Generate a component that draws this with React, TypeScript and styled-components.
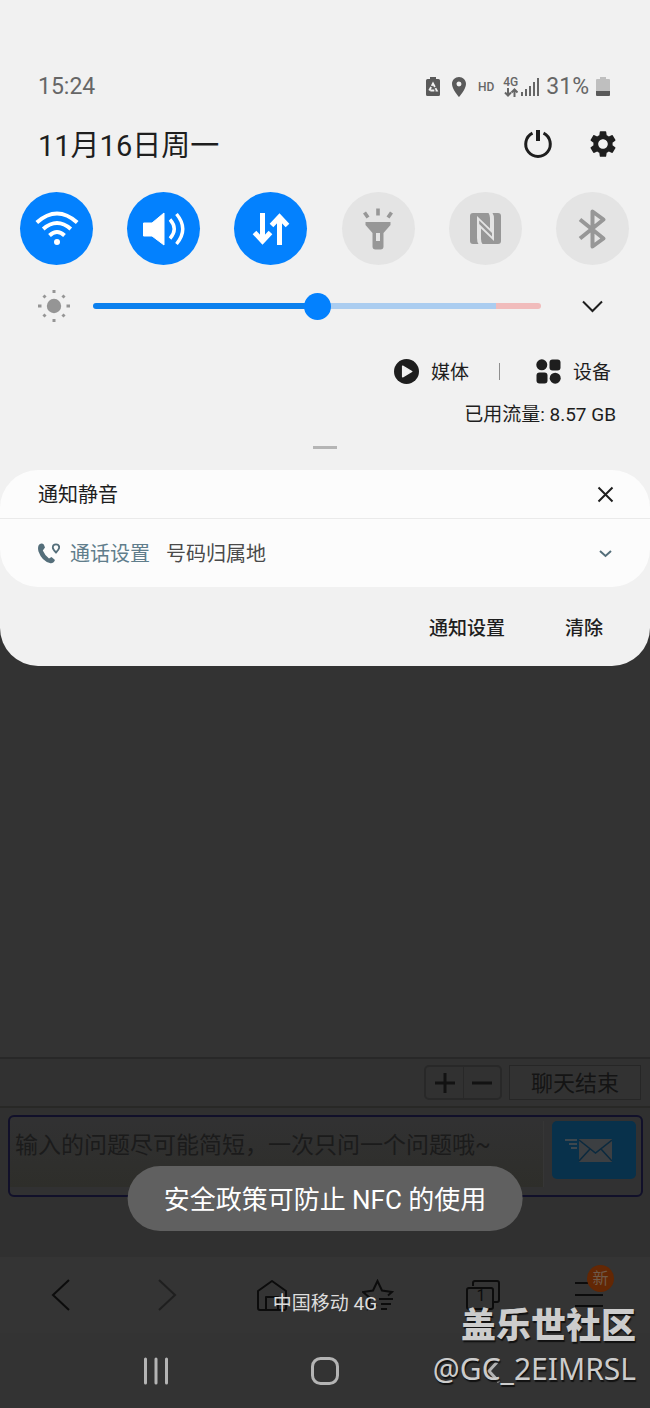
import React from "react";
import styled, { createGlobalStyle, css } from "styled-components";
import { MdLocationOn, MdSettings } from "react-icons/md";

const GlobalStyle = createGlobalStyle`
  *, *::before, *::after { box-sizing: border-box; }
  body {
    margin: 0;
    background: #333333;
    font-family: Roboto, "Noto Sans CJK SC", sans-serif;
    color: #1e1e1e;
  }
  button, input, textarea { font: inherit; color: inherit; }
  button { border: 0; padding: 0; background: none; cursor: pointer; }
  svg { display: block; flex: none; }
`;

const Screen = styled.div`
  position: relative;
  min-height: 100vh;
  display: flex;
  flex-direction: column;
`;

const Shade = styled.section`
  background: #f1f1f1;
  border-radius: 0 0 38px 38px;
  padding-top: 72px;
`;

const StatusBar = styled.div`
  display: flex;
  align-items: center;
  justify-content: space-between;
  height: 30px;
  padding: 0 40px 0 38px;
  font-size: 23px;
  line-height: 30px;
  color: #666666;
`;

const StatusIcons = styled.div`
  display: flex;
  align-items: center;
  gap: 7px;
`;

const HdMark = styled.span`
  font-size: 12px;
  font-weight: 500;
  margin: 0 2px 0 0;
`;

const Network = styled.span`
  display: flex;
  align-items: center;
  gap: 3px;
`;

const NetworkType = styled.span`
  display: flex;
  flex-direction: column;
  align-items: center;
  font-size: 12px;
  line-height: 11px;
  font-weight: 500;
`;

const BatteryLevel = styled.span`
  display: flex;
  align-items: center;
  gap: 7px;
`;

const DateRow = styled.header`
  display: flex;
  align-items: center;
  justify-content: space-between;
  height: 44px;
  margin-top: 20px;
  padding: 0 31px 0 38px;
`;

const DateText = styled.h1`
  margin: 0;
  padding-top: 4px;
  font-size: 29px;
  line-height: 40px;
  font-weight: 400;
`;

const HeaderActions = styled.div`
  display: flex;
  align-items: center;
  gap: 34px;
`;

const IconButton = styled.button`
  display: flex;
  align-items: center;
  justify-content: center;
`;

const Toggles = styled.div`
  display: flex;
  justify-content: space-between;
  margin-top: 26px;
  padding: 0 21px 0 20px;
`;

const Toggle = styled.button<{ $on?: boolean }>`
  width: 73px;
  height: 73px;
  border-radius: 50%;
  display: flex;
  align-items: center;
  justify-content: center;
  background: ${(p) => (p.$on ? "#0381fe" : "#e4e4e4")};
  color: ${(p) => (p.$on ? "#ffffff" : "#979797")};
`;

const BrightnessRow = styled.div`
  display: flex;
  align-items: center;
  height: 30px;
  margin-top: 26px;
  padding: 0 47px 0 38px;
`;

const thumb = css`
  width: 27px;
  height: 27px;
  border: 0;
  border-radius: 50%;
  background: #0381fe;
`;

const Brightness = styled.input`
  appearance: none;
  flex: 1;
  min-width: 0;
  height: 6px;
  margin: 0 41px 0 23px;
  border-radius: 3px;
  background: linear-gradient(90deg, #0b80ee 50%, #abcdf0 50%, #abcdf0 90%, #f1bcbc 90%);
  &::-webkit-slider-thumb { appearance: none; ${thumb} }
  &::-moz-range-thumb { ${thumb} }
`;

const Shortcuts = styled.div`
  display: flex;
  justify-content: flex-end;
  align-items: center;
  height: 30px;
  margin-top: 35px;
  padding-right: 39px;
`;

const Shortcut = styled.button`
  display: flex;
  align-items: center;
  gap: 12px;
  font-size: 19px;
  line-height: 28px;
`;

const ShortcutLabel = styled.span`
  padding-top: 3px;
`;

const Divider = styled.span`
  width: 1px;
  height: 17px;
  margin: 0 36px 0 30px;
  background: #8f8f8f;
`;

const DataUsage = styled.p`
  margin: 17px 34px 0;
  text-align: right;
  font-size: 19px;
  line-height: 24px;
`;

const Handle = styled.div`
  width: 24px;
  height: 3px;
  margin: 19px auto 0;
  background: #b5b5b5;
`;

const Card = styled.div`
  margin-top: 21px;
  border-radius: 38px;
  background: #fcfcfc;
`;

const CardRow = styled.div<{ $tall?: boolean }>`
  display: flex;
  align-items: center;
  height: ${(p) => (p.$tall ? "68px" : "49px")};
  padding: 0 36px 0 38px;
  border-bottom: ${(p) => (p.$tall ? "0" : "1px solid #eaeaea")};
  font-size: 20px;
  line-height: 30px;
  & > span { padding-top: 2px; }
  & > button { margin-left: auto; }
`;

const AppName = styled.span`
  margin: 0 16px 0 10px;
  color: #607d8b;
`;

const NoticeText = styled.span`
  color: #4a4a4a;
`;

const ShadeFooter = styled.footer`
  display: flex;
  justify-content: flex-end;
  gap: 60px;
  height: 79px;
  padding: 0 47px 0 0;
`;

const FooterButton = styled.button`
  font-size: 19px;
  font-weight: 500;
`;

const Backdrop = styled.div`
  flex: 1;
  min-height: 120px;
`;

const Chat = styled.section`
  height: 200px;
  background: #303030;
`;

const ChatTools = styled.div`
  display: flex;
  align-items: center;
  justify-content: flex-end;
  gap: 7px;
  height: 51px;
  padding: 0 9px;
  border-top: 2px solid #282828;
  border-bottom: 2px solid #282826;
  background: #313131;
`;

const ZoomGroup = styled.div`
  display: flex;
  border: 2px solid #282828;
  border-radius: 5px;
`;

const ZoomButton = styled.button`
  display: flex;
  align-items: center;
  justify-content: center;
  width: 37px;
  height: 31px;
  color: #121212;
  & + & { border-left: 1px solid #282828; }
`;

const EndChat = styled.button`
  width: 132px;
  height: 35px;
  padding-top: 2px;
  border: 1px solid #262626;
  background: #323232;
  color: #141414;
  font-size: 22px;
  line-height: 30px;
`;

const Composer = styled.form`
  display: flex;
  align-items: flex-start;
  gap: 8px;
  height: 82px;
  margin: 7px 7px 0 8px;
  padding: 4px 5px 0 0;
  border: 2px solid #11102a;
  border-radius: 6px;
  background: #313132;
`;

const Message = styled.textarea`
  flex: 1;
  min-width: 0;
  height: 66px;
  padding: 9px 5px;
  border: 0;
  border-right: 1px solid #363636;
  resize: none;
  background: linear-gradient(#313132, #2e2e2a);
  font-size: 23px;
  line-height: 32px;
  &::placeholder { color: #1b1b1b; opacity: 1; }
`;

const Send = styled.button`
  display: flex;
  align-items: center;
  justify-content: center;
  width: 84px;
  height: 58px;
  padding-right: 13px;
  border-radius: 5px;
  background: #08314b;
`;

const BrowserBar = styled.nav`
  display: flex;
  justify-content: space-between;
  height: 76px;
  padding: 16px 43px 0;
  background: #343434;
  color: #0c0c0c;
`;

const BrowserButton = styled.button<{ $faded?: boolean }>`
  position: relative;
  display: flex;
  align-items: center;
  justify-content: center;
  width: 36px;
  height: 44px;
  opacity: ${(p) => (p.$faded ? 0.5 : 1)};
`;

const TabCount = styled.span`
  position: absolute;
  left: 11px;
  top: 13px;
  font-size: 16px;
  line-height: 20px;
`;

const NewBadge = styled.span`
  position: absolute;
  left: 16px;
  top: -8px;
  width: 27px;
  height: 27px;
  border-radius: 50%;
  background: #632704;
  color: #6f5a4a;
  font-size: 16px;
  line-height: 27px;
  text-align: center;
`;

const SystemNav = styled.nav`
  display: flex;
  align-items: center;
  justify-content: space-between;
  width: 100%;
  height: 75px;
  padding: 0 142px;
  color: #b4b4b4;
`;

const SystemButton = styled(IconButton)`
  width: 28px;
  height: 44px;
`;

const Toast = styled.div`
  position: absolute;
  left: 50%;
  bottom: 177px;
  transform: translateX(-50%);
  padding: 4px 36px 0;
  border-radius: 33px;
  background: #606060;
  color: #ffffff;
  font-size: 26px;
  line-height: 61px;
  white-space: nowrap;
`;

const Carrier = styled.div`
  position: absolute;
  left: 0;
  right: 0;
  bottom: 90px;
  text-align: center;
  font-size: 19px;
  line-height: 28px;
  color: #dddddd;
`;

const Watermark = styled.div`
  position: absolute;
  right: 14px;
  bottom: 16px;
  text-align: right;
  color: #cccccc;
  text-shadow: 1px 2px 1px #111111;
`;

const Community = styled.div`
  font-family: "Noto Sans CJK SC", sans-serif;
  font-size: 35px;
  line-height: 46px;
  font-weight: 900;
`;

const Author = styled.div`
  font-family: "Noto Sans", sans-serif;
  font-size: 30px;
  line-height: 46px;
`;

const Stroke = ({ w, h, sw = 2, children }: { w: number; h: number; sw?: number; children: React.ReactNode }) => (
  <svg width={w} height={h} viewBox={`0 0 ${w} ${h}`} fill="none" stroke="currentColor" strokeWidth={sw} aria-hidden="true">
    {children}
  </svg>
);

const RecycleBattery = () => (
  <svg width="14" height="20" viewBox="0 0 14 20" aria-hidden="true">
    <path fill="#5a5a5a" d="M4 0h6v2h2.500q1.500 0 1.500 1.500v14q0 1.500-1.500 1.500h-11Q0 19 0 17.500v-14Q0 2 1.500 2H4z" />
    <path fill="none" stroke="#f1f1f1" strokeWidth="1.800" strokeDasharray="4 1.200" d="M7 6.500L10.800 13.500H3.200Z" />
  </svg>
);

const DataArrows = () => (
  <Stroke w={14} h={9} sw={2}>
    <path d="M4 0v7M1 4.500l3 3 3-3M10.500 9V2M7.500 4.500l3-3 3 3" />
  </Stroke>
);

const Signal = () => (
  <svg width="18" height="18" viewBox="0 0 18 18" fill="#666666" aria-hidden="true">
    <path d="M0 14h2v4H0zM4 11h2v7H4zM8 8h2v10H8zM12 4h2v14h-2zM16 0h2v18h-2z" />
  </svg>
);

const Battery = () => (
  <svg width="14" height="20" viewBox="0 0 14 20" aria-hidden="true">
    <path fill="#bfbfbf" d="M4 0h6v2h3q1 0 1 1v11H0V3q0-1 1-1h3z" />
    <path fill="#5a5a5a" d="M0 14h14v4q0 1-1 1H1q-1 0-1-1z" />
  </svg>
);

const Power = () => (
  <Stroke w={30} h={30} sw={3}>
    <path d="M9.500 4.200A12.300 12.300 0 1 0 20.500 4.200" />
    <path strokeWidth="4" d="M15 1v11" />
  </Stroke>
);

const Wifi = () => (
  <svg width="44" height="36" viewBox="0 0 44 36" fill="none" stroke="currentColor" strokeWidth="4" aria-hidden="true">
    <path d="M1.800 11.500Q22-6.500 42.200 11.500M8.200 18Q22 6 35.800 18M14.500 24.500Q22 17.500 29.500 24.500" />
    <circle cx="22" cy="31" r="3" fill="currentColor" stroke="none" />
  </svg>
);

const Sound = () => (
  <svg width="42" height="34" viewBox="0 0 42 34" aria-hidden="true">
    <path fill="currentColor" stroke="currentColor" strokeWidth="1" strokeLinejoin="round" d="M.5 11H9L21 1v32L9 24H.5z" />
    <path fill="none" stroke="currentColor" strokeWidth="3.400" d="M27 7.500q8.500 9.500 0 19M33.500 2q12.500 15 0 30" />
  </svg>
);

const MobileData = () => (
  <Stroke w={38} h={34} sw={5}>
    <path d="M10.500 1v27M2.500 20.500l8 8.500 8-8.500M27.500 33V6M19.500 13.500l8-8.500 8 8.500" />
  </Stroke>
);

const Torch = () => (
  <svg width="30" height="42" viewBox="0 0 30 42" aria-hidden="true">
    <path fill="currentColor" fillRule="evenodd" d="M2.500 14h25v3l-7 8v13.500q0 3-3 3h-5q-3 0-3-3V25l-7-8zM13 25v8h4v-8z" />
    <path fill="none" stroke="currentColor" strokeWidth="3.600" d="M15 .5v7M1.500 4.500l3.500 5M28.500 4.500l-3.500 5" />
  </svg>
);

const Nfc = () => (
  <svg width="31" height="31" viewBox="0 0 31 31" aria-hidden="true">
    <rect width="31" height="31" rx="3" fill="currentColor" />
    <path fill="#e4e4e4" d="M7 3L20 15.500V5Q20 2 18.500 0h4Q24 2 24 6V28L11 15.500V26q0 3 1.500 5h-4Q7 29 7 25z" />
    <path fill="currentColor" d="M9.200 7.500L22 20v3.500L9.200 11z" />
  </svg>
);

const Bluetooth = () => (
  <Stroke w={30} h={42} sw={4}>
    <path strokeLinejoin="round" d="M3 11.500L26.500 30.500 15.500 38.500V3.500L26.500 11.500 3 30.500" />
  </Stroke>
);

const Sun = () => (
  <svg width="32" height="32" viewBox="0 0 32 32" aria-hidden="true">
    <circle cx="16" cy="16" r="7.200" fill="#959595" />
    <path stroke="#959595" strokeWidth="3" d="M16 0v3M16 29v3M0 16h3.500M28.500 16H32M5.500 5.500l2 2M24.500 24.500l2 2M26.500 5.500l-2 2M7.500 24.500l-2 2" />
  </svg>
);

const Chevron = ({ w, h, sw, color = "currentColor" }: { w: number; h: number; sw: number; color?: string }) => (
  <Stroke w={w} h={h} sw={sw}>
    <path stroke={color} d={`M1 1.500L${w / 2} ${h - 2}L${w - 1} 1.500`} />
  </Stroke>
);

const PlayCircle = () => (
  <svg width="25" height="25" viewBox="0 0 26 26" aria-hidden="true">
    <circle cx="13" cy="13" r="13" fill="#1e1e1e" />
    <path d="M9 7.500v11l9.500-5.500z" fill="#f1f1f1" stroke="#f1f1f1" strokeWidth="1.500" strokeLinejoin="round" />
  </svg>
);

const Devices = () => (
  <svg width="25" height="25" viewBox="0 0 25 25" fill="#1e1e1e" aria-hidden="true">
    <circle cx="5.800" cy="5.800" r="5.500" />
    <rect x="13.500" y="0.500" width="11" height="11" rx="3" />
    <rect x="0.500" y="13.500" width="11" height="11" rx="3" />
    <circle cx="19.200" cy="19.200" r="5.500" />
  </svg>
);

const CallLocation = () => (
  <svg width="22" height="21" viewBox="0 0 22 21" aria-hidden="true">
    <path fill="#546e7a" d="M1.500 1.200Q4-.3 5.800 1.500L7 4.500 4.800 7.500Q7 12.500 11 15.500L13.500 14 17 17Q15.500 20.500 12.500 20.200 4 18.500.5 8.500-.8 3 1.500 1.200z" />
    <path fill="none" stroke="#546e7a" strokeWidth="1.800" d="M18 9.500q-3.200-3.200-3.200-5a3.200 3.200 0 0 1 6.400 0q0 1.800-3.200 5z" />
  </svg>
);

const Envelope = () => (
  <svg width="48" height="24" viewBox="0 0 48 24" aria-hidden="true">
    <path fill="none" stroke="#3d474e" strokeWidth="2" d="M1 2h12M5 6h8M7 10h6" />
    <rect x="15" y="1" width="33" height="23" fill="#3c3f42" />
    <path fill="none" stroke="#0b2a3f" strokeWidth="1.500" d="M15 2l16.500 13L48 2M15 23l11-12M48 23L37 11" />
  </svg>
);

const TOGGLES = [
  { label: "WLAN", on: true, Icon: Wifi },
  { label: "声音", on: true, Icon: Sound },
  { label: "移动数据", on: true, Icon: MobileData },
  { label: "手电筒", on: false, Icon: Torch },
  { label: "NFC", on: false, Icon: Nfc },
  { label: "蓝牙", on: false, Icon: Bluetooth },
];

export default function App() {
  return (
    <>
      <GlobalStyle />
      <Screen>
        <Shade>
          <StatusBar>
            <span>15:24</span>
            <StatusIcons>
              <RecycleBattery />
              <MdLocationOn size={24} color="#5a5a5a" />
              <HdMark>HD</HdMark>
              <Network>
                <NetworkType>
                  4G
                  <DataArrows />
                </NetworkType>
                <Signal />
              </Network>
              <BatteryLevel>
                31%
                <Battery />
              </BatteryLevel>
            </StatusIcons>
          </StatusBar>

          <DateRow>
            <DateText>11月16日周一</DateText>
            <HeaderActions>
              <IconButton aria-label="电源"><Power /></IconButton>
              <IconButton aria-label="设置"><MdSettings size={32} /></IconButton>
            </HeaderActions>
          </DateRow>

          <Toggles>
            {TOGGLES.map(({ label, on, Icon }) => (
              <Toggle key={label} $on={on} aria-label={label} aria-pressed={on}>
                <Icon />
              </Toggle>
            ))}
          </Toggles>

          <BrightnessRow>
            <Sun />
            <Brightness type="range" min={0} max={100} defaultValue={50} aria-label="亮度" />
            <IconButton aria-label="展开"><Chevron w={21} h={13} sw={2} /></IconButton>
          </BrightnessRow>

          <Shortcuts>
            <Shortcut><PlayCircle /><ShortcutLabel>媒体</ShortcutLabel></Shortcut>
            <Divider />
            <Shortcut><Devices /><ShortcutLabel>设备</ShortcutLabel></Shortcut>
          </Shortcuts>
          <DataUsage>已用流量: 8.57 GB</DataUsage>
          <Handle />

          <Card>
            <CardRow>
              <span>通知静音</span>
              <IconButton aria-label="关闭">
                <Stroke w={17} h={17} sw={2}><path d="M1.500 1.500l14 14M15.500 1.500l-14 14" /></Stroke>
              </IconButton>
            </CardRow>
            <CardRow $tall>
              <CallLocation />
              <AppName>通话设置</AppName>
              <NoticeText>号码归属地</NoticeText>
              <IconButton aria-label="展开通知">
                <svg width="17" height="12" viewBox="0 0 17 12" fill="none" stroke="#546e7a" strokeWidth="2" aria-hidden="true">
                  <path d="M3 4l5.500 5L14 4" />
                </svg>
              </IconButton>
            </CardRow>
          </Card>

          <ShadeFooter>
            <FooterButton>通知设置</FooterButton>
            <FooterButton>清除</FooterButton>
          </ShadeFooter>
        </Shade>

        <Backdrop />

        <Chat>
          <ChatTools>
            <ZoomGroup>
              <ZoomButton aria-label="放大"><Stroke w={20} h={20} sw={3}><path d="M0 10h20M10 0v20" /></Stroke></ZoomButton>
              <ZoomButton aria-label="缩小"><Stroke w={20} h={20} sw={3}><path d="M0 10h20" /></Stroke></ZoomButton>
            </ZoomGroup>
            <EndChat>聊天结束</EndChat>
          </ChatTools>
          <Composer onSubmit={(e) => e.preventDefault()}>
            <Message aria-label="输入问题" placeholder="输入的问题尽可能简短，一次只问一个问题哦~" />
            <Send aria-label="发送"><Envelope /></Send>
          </Composer>
        </Chat>

        <BrowserBar>
          <BrowserButton aria-label="后退">
            <Stroke w={20} h={32}><path d="M18 1L2 16l16 15" /></Stroke>
          </BrowserButton>
          <BrowserButton aria-label="前进" $faded>
            <Stroke w={20} h={32}><path d="M2 1l16 15L2 31" /></Stroke>
          </BrowserButton>
          <BrowserButton aria-label="主页">
            <Stroke w={32} h={32}><path strokeLinejoin="round" d="M2 12L16 2l14 10v17q0 2-2 2H4q-2 0-2-2zM10 31V18h12v13" /></Stroke>
          </BrowserButton>
          <BrowserButton aria-label="收藏">
            <Stroke w={32} h={32}><path d="M15 26l-9 4 2-11-7-6 10-1.500L15.500 2l4.500 9.500 10 1.500-4 3.500M17 20h14M19 25h10M19 30h6" /></Stroke>
          </BrowserButton>
          <BrowserButton aria-label="标签页">
            <Stroke w={36} h={32}><path d="M8 7V4q0-2 2-2h22q2 0 2 2v17q0 2-2 2h-4M4 9h22q2 0 2 2v17q0 2-2 2H4q-2 0-2-2V11q0-2 2-2z" /></Stroke>
            <TabCount>1</TabCount>
          </BrowserButton>
          <BrowserButton aria-label="菜单">
            <Stroke w={28} h={28}><path d="M0 2h28M0 14h28M0 25h28" /></Stroke>
            <NewBadge>新</NewBadge>
          </BrowserButton>
        </BrowserBar>

        <SystemNav>
          <SystemButton aria-label="最近任务">
            <Stroke w={26} h={28} sw={3}><path strokeLinecap="round" d="M2.500 2v24M13 2v24M23.500 2v24" /></Stroke>
          </SystemButton>
          <SystemButton aria-label="主屏幕">
            <Stroke w={28} h={28} sw={3}><rect x="1.500" y="1.500" width="25" height="25" rx="8" /></Stroke>
          </SystemButton>
          <SystemButton aria-label="返回">
            <Stroke w={14} h={26} sw={3}><path d="M12 2L2 13l10 11" /></Stroke>
          </SystemButton>
        </SystemNav>

        <Toast role="status">安全政策可防止 NFC 的使用</Toast>
        <Carrier>中国移动 4G</Carrier>
        <Watermark>
          <Community>盖乐世社区</Community>
          <Author>@GC_2EIMRSL</Author>
        </Watermark>
      </Screen>
    </>
  );
}
